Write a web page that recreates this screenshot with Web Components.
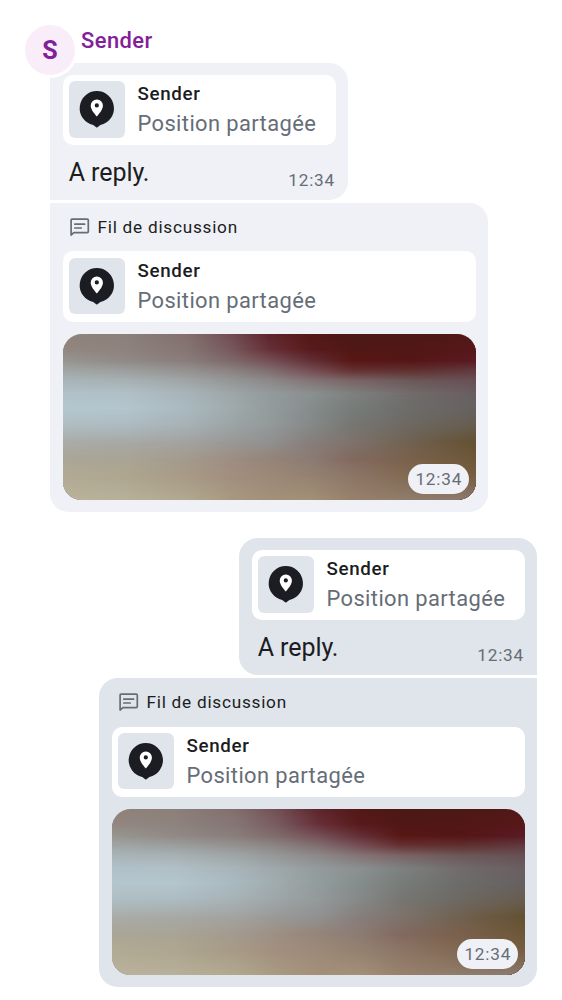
<!DOCTYPE html>
<html lang="fr">
<head>
<meta charset="utf-8">
<title>Messages</title>
<style>
body { margin: 0; background: #fff; font-family: Roboto, "Liberation Sans", sans-serif; }
</style>
</head>
<body>
<chat-timeline>
  <chat-group sender="Sender">
    <chat-bubble class="first short"><reply-card></reply-card><message-text time="12:34">A reply.</message-text></chat-bubble>
    <chat-bubble class="last"><thread-label>Fil de discussion</thread-label><reply-card></reply-card><blur-image>12:34</blur-image></chat-bubble>
  </chat-group>
  <chat-group mine>
    <chat-bubble mine class="first short"><reply-card></reply-card><message-text time="12:34">A reply.</message-text></chat-bubble>
    <chat-bubble mine class="last"><thread-label>Fil de discussion</thread-label><reply-card></reply-card><blur-image>12:34</blur-image></chat-bubble>
  </chat-group>
</chat-timeline>
<script>
const define = (name, html, setup) => customElements.define(name, class extends HTMLElement {
  constructor() {
    super();
    this.attachShadow({ mode: 'open' });
  }
  connectedCallback() {
    const t = document.createElement('template');
    t.innerHTML = html;
    this.shadowRoot.replaceChildren(t.content.cloneNode(true));
    if (setup) setup(this, this.shadowRoot);
  }
});

define('chat-timeline', `
<style>
:host { display: flex; flex-direction: column; gap: 25.2px; width: 562px; height: 1000px; box-sizing: border-box; padding: 62.5px 25px 0; overflow: hidden; }
</style><slot></slot>`);

define('chat-group', `
<style>
:host { display: flex; flex-direction: column; align-items: flex-start; gap: 3.4px; padding-left: 25px; position: relative; }
:host([mine]) { align-items: flex-end; padding-left: 0; }
header { position: absolute; left: -3px; top: -40.5px; display: flex; z-index: 1; color: #822099; }
.avatar { width: 50px; height: 50px; border: 3px solid #fff; border-radius: 50%; background: #f9edfa; display: grid; place-items: center; font-weight: 700; font-size: 25px; line-height: 51px; }
.name { font-weight: 500; font-size: 21.9px; line-height: 30px; letter-spacing: .46px; padding-top: 3.5px; margin-left: 3px; }
</style><slot></slot>`, (host, root) => {
  const name = host.getAttribute('sender');
  if (!name) return;
  const h = document.createElement('header');
  h.innerHTML = '<div class="avatar"></div><div class="name"></div>';
  h.children[0].textContent = name[0];
  h.children[1].textContent = name;
  root.append(h);
});

define('chat-bubble', `
<style>
:host { display: flex; flex-direction: column; box-sizing: border-box; width: 438px; height: 309.2px; padding: 12.5px; background: #f0f1f6; border-radius: 0 18.75px 18.75px 18.75px; }
:host(.short) { width: 298px; height: 137.3px; border-radius: 0 18.75px 18.75px 0; }
:host([mine]) { background: #e0e4eb; border-radius: 18.75px 0 18.75px 18.75px; }
:host([mine].short) { border-radius: 18.75px 18.75px 0 18.75px; }
</style><slot></slot>`);

define('reply-card', `
<style>
:host { display: flex; box-sizing: border-box; height: 70.3px; flex: none; padding: 6.25px; gap: 12.5px; background: #fff; border-radius: 10px; }
.thumb { width: 56.25px; height: 56.25px; border-radius: 6.25px; background: #e0e4eb; flex: none; }
svg { display: block; width: 100%; height: 100%; }
.text { display: flex; flex-direction: column; white-space: nowrap; padding-top: 1px; }
b { font-weight: 500; font-size: 18.75px; line-height: 25px; letter-spacing: .64px; color: #1b1d22; }
span { font-size: 21.9px; line-height: 31px; margin-top: 1px; letter-spacing: .39px; color: #656d77; }
</style>
<div class="thumb"><svg viewBox="0 0 36 36"><g transform="translate(-.2 -.6)">
<path d="M18 7a11 11 0 0 1 2.3 21.75L18.4 30.2q-.4.35-.8 0l-1.9-1.45A11 11 0 0 1 18 7Z" fill="#1b1d22"/>
<path fill-rule="evenodd" d="M18 12.4a3.85 3.85 0 0 0-3.9 3.85c0 2.5 2 4.8 3.9 7.05 1.9-2.25 3.9-4.55 3.9-7.05A3.85 3.85 0 0 0 18 12.4Zm0 2.5a1.35 1.35 0 1 1 0 2.7 1.35 1.35 0 0 1 0-2.7Z" fill="#fff"/>
</g></svg></div>
<div class="text"><b>Sender</b><span>Position partagée</span></div>`);

define('message-text', `
<style>
:host { display: flex; justify-content: space-between; align-items: flex-start; padding: 9px .5px 0 6.25px; font-size: 25px; line-height: 37.5px; color: #1b1d22; }
span { letter-spacing: -.08px; }
time { font-size: 17.2px; line-height: 20px; margin-top: 16px; letter-spacing: .78px; color: #656d77; }
</style><span><slot></slot></span><time></time>`, (host, root) => {
  root.querySelector('time').textContent = host.getAttribute('time');
});

define('thread-label', `
<style>
:host { display: flex; align-items: center; gap: 8px; height: 22.6px; margin-bottom: 13.2px; padding-left: 7px; font-size: 17.2px; letter-spacing: .75px; color: #1b1d22; }
svg { width: 20px; height: 20px; flex: none; }
</style>
<svg viewBox="0 0 20 20" fill="none" stroke="#656d77" stroke-width="1.7">
<path d="M1.1 18V3.2q0-1 1-1h15.2q1 0 1 1v11.4q0 1-1 1H3.9Z" stroke-linejoin="round"/>
<path d="M4.8 7.2h9.8M4.8 11h6.4" stroke-linecap="round"/></svg><slot></slot>`);

// Preview colours: each row is [vertical stop, colours at the horizontal stops].
const stops = [0, 15, 30, 40, 50, 60, 70, 85, 100];
const rows = [
  [0,   '8f827b 8c807a 826f6c 734f54 5e252c 541816 4b1916 4c1916 521817'],
  [9,   '92867f 8e837e 857573 785b5e 672f38 581a1b 501815 521816 561819'],
  [16,  '979590 918986 897d7b 7f6a6b 744f56 622f36 581715 551616 5a1a24'],
  [22,  'a0a6a5 9c9f9e 949290 8b8483 806e70 764e54 653132 60302f 623a40'],
  [28,  'a9b4b8 a7b1b4 9fa5a6 959797 8d8889 837476 7b6466 6c5758 685054'],
  [36,  'b1c1c9 b1c0c7 a8b4b9 9fa8aa 939b9c 8b9090 7d8180 716b6b 695e62'],
  [45,  'b4c6ce b4c5cd a9b9c0 a0abac 939c9d 858c8c 777c79 6c6b69 666161'],
  [55,  'afbdc1 adbbc1 a7b1b5 9da5a7 949999 858988 777672 6d6761 675d4f'],
  [65,  'a9aca8 a7a9a6 a3a3a0 9a9997 909191 877e7b 7d736c 70604f 645132'],
  [75,  'aaa597 a9a495 a39a8e 9d8f84 958479 8b7b73 82695f 79604b 6d5738'],
  [85,  'b1aa94 aea68f a79a86 a28f7f 9c8978 958170 8c7567 81684f 765c40'],
  [100, 'bab29b b7b09a b1a88e a89a81 a49079 a29077 98816b 8e7c6c 8b7a70']
];
define('blur-image', `
<style>
:host { display: flex; align-items: flex-end; justify-content: flex-end; position: relative; box-sizing: border-box; margin-top: 12.5px; height: 165.6px; flex: none; border-radius: 18.75px; overflow: hidden; padding: 6.25px; }
.row { position: absolute; inset: 0; }
time { position: relative; box-sizing: border-box; width: 61px; height: 30px; border-radius: 15px; background: #f0f1f6; color: #656d77; text-align: center; font-size: 17.2px; line-height: 31px; letter-spacing: .78px; }
</style><time><slot></slot></time>`, (host, root) => {
  const time = root.querySelector('time');
  rows.forEach(([y, colours], i) => {
    const d = document.createElement('div');
    d.className = 'row';
    d.style.background = 'linear-gradient(90deg,' + colours.split(' ').map((c, k) => `#${c} ${stops[k]}%`) + ')';
    if (i) d.style.maskImage = `linear-gradient(transparent ${rows[i - 1][0]}%, #000 ${y}%)`;
    root.insertBefore(d, time);
  });
});
</script>
</body>
</html>
